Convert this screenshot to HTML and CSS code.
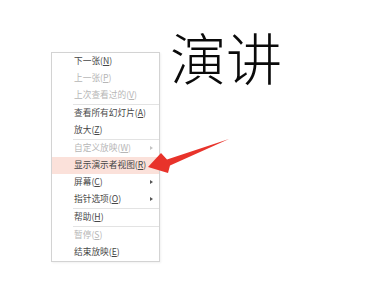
FILE: index.html
```html
<!DOCTYPE html>
<html lang="zh-CN">
<head>
<meta charset="utf-8">
<link rel="stylesheet" href="styles.css">
</head>
<body>
<div class="slide">
  <h1 class="title">演讲</h1>

  <div class="menu">
    <div class="item">下一张(<u>N</u>)</div>
    <div class="item disabled">上一张(<u>P</u>)</div>
    <div class="item disabled">上次查看过的(<u>V</u>)</div>
    <div class="sep"></div>
    <div class="item">查看所有幻灯片(<u>A</u>)</div>
    <div class="item">放大(<u>Z</u>)</div>
    <div class="sep"></div>
    <div class="item disabled sub">自定义放映(<u>W</u>)</div>
    <div class="item active">显示演示者视图(<u>R</u>)</div>
    <div class="item sub">屏幕(<u>C</u>)</div>
    <div class="item sub">指针选项(<u>O</u>)</div>
    <div class="sep"></div>
    <div class="item">帮助(<u>H</u>)</div>
    <div class="sep"></div>
    <div class="item disabled">暂停(<u>S</u>)</div>
    <div class="item">结束放映(<u>E</u>)</div>
  </div>

  <svg class="pointer" width="386" height="288" viewBox="0 0 386 288">
    <polygon points="148,167 161,153 167,159.5 229,139 170,165.5 168,173" fill="#e8332b"/>
  </svg>
</div>
</body>
</html>
```

FILE: styles.css
```css
html, body {
  margin: 0;
  padding: 0;
  background: #ffffff;
}

.slide {
  position: relative;
  width: 386px;
  height: 288px;
  overflow: hidden;
  background: #ffffff;
}

.title {
  margin: 0;
  padding: 28px 0 0 170px;
  font-family: "Noto Sans CJK SC", "Noto Sans CJK JP", sans-serif;
  font-weight: 300;
  font-size: 56px;
  line-height: 56px;
  color: #0a0a0a;
  letter-spacing: 0;
}

.menu {
  position: absolute;
  left: 51px;
  top: 52px;
  width: 107px;
  background: #ffffff;
  border: 1px solid #d3d3d3;
  box-shadow: 1px 1px 2px rgba(0, 0, 0, 0.06);
  font-family: "Noto Sans CJK SC", "Noto Sans CJK JP", sans-serif;
  font-size: 8.7px;
  color: #474747;
}

.item {
  position: relative;
  height: 17px;
  line-height: 16px;
  padding-left: 22px;
  white-space: nowrap;
}

.item u {
  text-decoration: underline;
  text-underline-offset: 1px;
}

.item.disabled {
  color: #b6b6b6;
}

.item.active {
  background: #fbe1da;
}

.item.sub::after {
  content: "";
  position: absolute;
  right: 6px;
  top: 6px;
  border-top: 2.5px solid transparent;
  border-bottom: 2.5px solid transparent;
  border-left: 3px solid #555555;
}

.item.sub.disabled::after {
  border-left-color: #c4c4c4;
}

.sep {
  height: 1px;
  margin-left: 21px;
  background: #e3e3e3;
}

.pointer {
  position: absolute;
  left: 0;
  top: 0;
}
```
